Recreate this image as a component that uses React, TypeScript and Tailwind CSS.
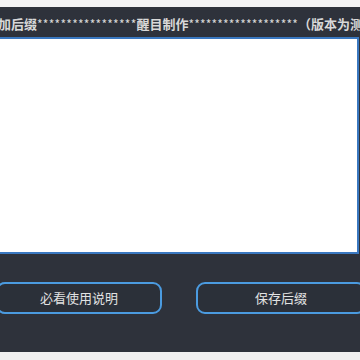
export default function App() {
  const font = { fontFamily: '"Noto Sans CJK SC", "Noto Sans", sans-serif' }
  const stars1 = '*'.repeat(17)
  const stars2 = '*'.repeat(19)
  return (
    <div className="w-[360px] h-[360px] overflow-hidden bg-[#f0f0f0]" style={font}>
      <div className="h-[7px] bg-[#f3f3f3]" />
      <div className="h-[345px] bg-[#2e323b] flex flex-col overflow-hidden">
        {/* title bar */}
        <div className="h-[30px] pt-[3px] flex items-center overflow-hidden">
          <span className="whitespace-nowrap -ml-[15px] text-[13px] font-bold text-[#d8d8d8] leading-none">
            添加后缀<span className="text-[12px] font-normal tracking-[0.25px]">{stars1}</span>醒目制作<span className="text-[12px] font-normal tracking-[0.15px]">{stars2}</span>（版本为测试版）
          </span>
        </div>
        {/* text area */}
        <div className="-ml-[4px] w-[363px] h-[217px] shrink-0 bg-white border-2 border-[#3a78c0]" />
        {/* buttons */}
        <div className="flex mt-[28px]">
          <button className="-ml-[4px] w-[166px] h-[32px] shrink-0 rounded-[9px] border-2 border-[#4b9be0] bg-[#2b3039] text-[13px] text-[#e2e2e2]">
            必看使用说明
          </button>
          <button className="ml-[34px] w-[170px] h-[32px] shrink-0 rounded-[9px] border-2 border-[#4b9be0] bg-[#2b3039] text-[13px] text-[#e2e2e2]">
            保存后缀
          </button>
        </div>
      </div>
    </div>
  )
}
